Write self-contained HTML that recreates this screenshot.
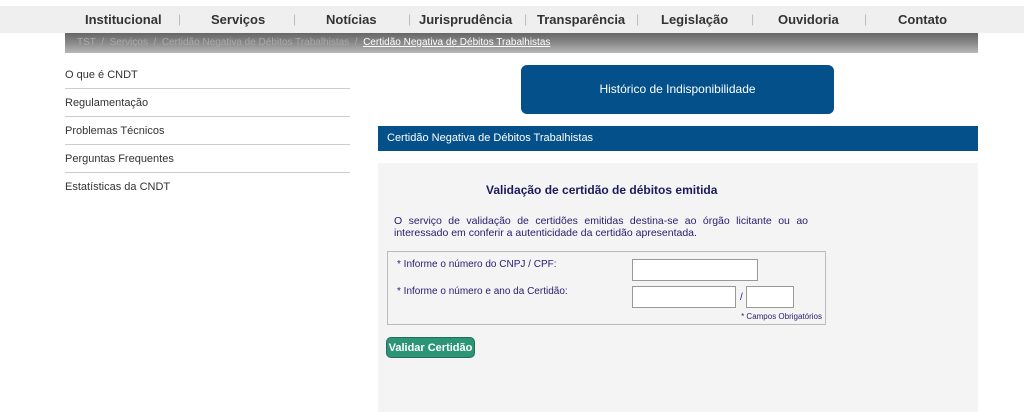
<!DOCTYPE html>
<html><head><meta charset="utf-8"><style>
*{margin:0;padding:0;box-sizing:border-box}
body{width:1024px;height:412px;overflow:hidden;background:#fff;font-family:"Liberation Sans",Arial,sans-serif;position:relative}
.nav{position:absolute;left:0;top:6px;width:1024px;height:27px;background:#efefef}
.nav span{position:absolute;top:6px;font-size:13px;font-weight:bold;color:#333}
.nav i{position:absolute;top:6px;font-style:normal;color:#bbb;font-size:12px}
.bc{position:absolute;left:65px;top:33px;width:913px;height:20px;background:linear-gradient(#666,#8a8a8a 50%,#b8b8b8);font-size:10px;color:#a8a8a8;padding:4px 0 0 12px}
.bc u{color:#fff}
.side{position:absolute;left:65px;top:61px;width:285px}
.side div{height:28px;border-bottom:1px solid #ccc;font-size:11px;color:#333;padding-top:8px}
.side div:last-child{border:none}
.hist{position:absolute;left:521px;top:65px;width:313px;height:49px;background:#04508a;border-radius:6px;color:#fff;font-size:12px;text-align:center;line-height:49px}
.bar{position:absolute;left:378px;top:126px;width:600px;height:25px;background:#04508a;color:#fff;font-size:11px;line-height:25px;padding-left:9px}
.panel{position:absolute;left:378px;top:163px;width:600px;height:249px;background:#f4f4f4}
.t{position:absolute;left:486px;top:183px;font-size:12px;font-weight:bold;color:#1a1a5e}
.p{position:absolute;left:394px;top:215px;width:414px;font-size:10.5px;color:#2b1a6e;text-align:justify;text-align-last:left;line-height:12px}
.box{position:absolute;left:387px;top:251px;width:439px;height:74px;border:1px solid #b8bcc0}
.l{position:absolute;font-size:10px;color:#2b1a6e}
.in{position:absolute;background:#fff;border:1px solid #999}
.btn{position:absolute;left:386px;top:337px;width:89px;height:21px;background:#2b9575;border-radius:5px;color:#fff;font-size:11px;font-weight:bold;text-align:center;line-height:20px;border:1px solid #1f6f57}
</style></head><body>
<div class="nav">
<span style="left:85px">Institucional</span><i style="left:178px">|</i>
<span style="left:211px">Serviços</span><i style="left:293px">|</i>
<span style="left:326px">Notícias</span><i style="left:408px">|</i>
<span style="left:419px">Jurisprudência</span><i style="left:524px">|</i>
<span style="left:537px">Transparência</span><i style="left:636px">|</i>
<span style="left:661px">Legislação</span><i style="left:751px">|</i>
<span style="left:778px">Ouvidoria</span><i style="left:864px">|</i>
<span style="left:898px">Contato</span>
</div>
<div class="bc">TST &nbsp;/ &nbsp;Serviços &nbsp;/ &nbsp;Certidão Negativa de Débitos Trabalhistas &nbsp;/ &nbsp;<u>Certidão Negativa de Débitos Trabalhistas</u></div>
<div class="side"><div>O que é CNDT</div><div>Regulamentação</div><div>Problemas Técnicos</div><div>Perguntas Frequentes</div><div>Estatísticas da CNDT</div></div>
<div class="hist">Histórico de Indisponibilidade</div>
<div class="bar">Certidão Negativa de Débitos Trabalhistas</div>
<div class="panel"></div>
<div class="t">Validação de certidão de débitos emitida</div>
<div class="p">O serviço de validação de certidões emitidas destina-se ao órgão licitante ou ao interessado em conferir a autenticidade da certidão apresentada.</div>
<div class="box"></div>
<div class="l" style="left:397px;top:259px">* Informe o número do CNPJ / CPF:</div>
<div class="l" style="left:397px;top:286px">* Informe o número e ano da Certidão:</div>
<div class="in" style="left:632px;top:259px;width:126px;height:22px"></div>
<div class="in" style="left:632px;top:286px;width:104px;height:22px"></div>
<div class="l" style="left:740px;top:292px">/</div>
<div class="in" style="left:746px;top:286px;width:48px;height:22px"></div>
<div class="l" style="left:722px;top:312px;width:100px;text-align:right;font-size:8px">* Campos Obrigatórios</div>
<div class="btn">Validar Certidão</div>
</body></html>
